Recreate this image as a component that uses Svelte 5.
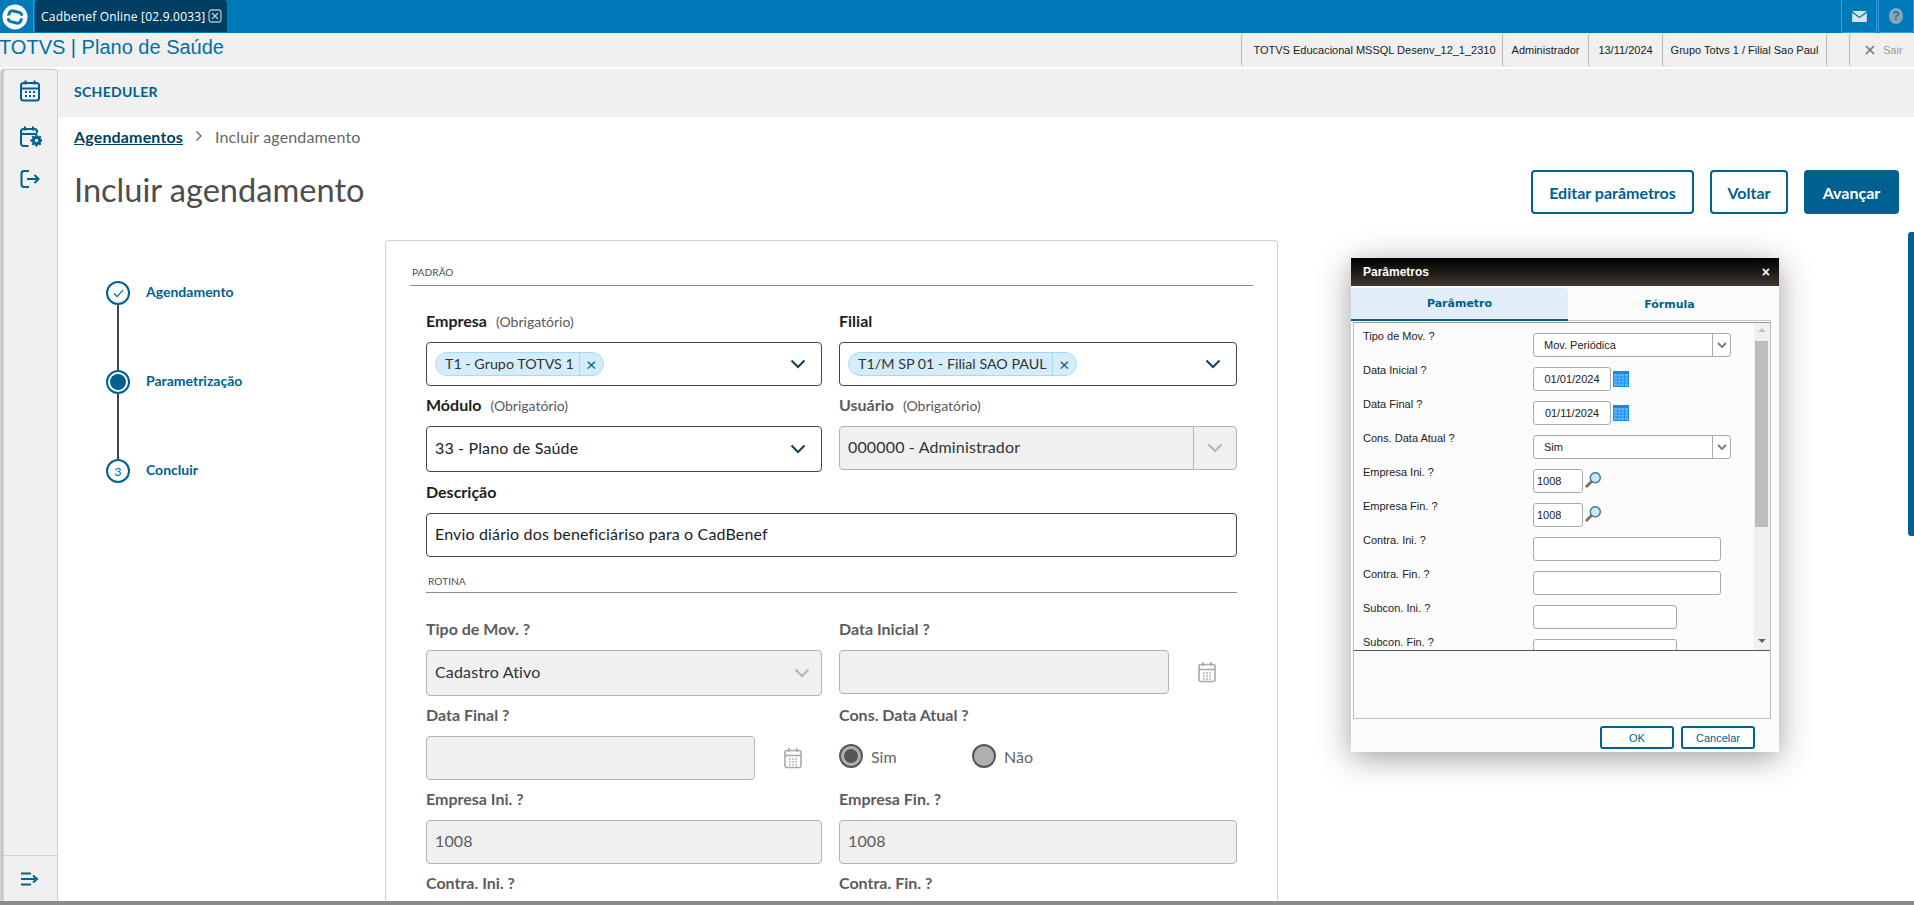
<script lang="ts">
  const info = [
    { text: 'TOTVS Educacional MSSQL Desenv_12_1_2310', w: 261 },
    { text: 'Administrador', w: 86 },
    { text: '13/11/2024', w: 74 },
    { text: 'Grupo Totvs 1 / Filial Sao Paul', w: 164 }
  ]

  const steps = [
    { label: 'Agendamento', state: 'done' },
    { label: 'Parametrização', state: 'active' },
    { label: 'Concluir', state: 'todo' }
  ]

  const params = [
    { label: 'Tipo de Mov. ?', kind: 'select', value: 'Mov. Periódica' },
    { label: 'Data Inicial ?', kind: 'date', value: '01/01/2024' },
    { label: 'Data Final ?', kind: 'date', value: '01/11/2024' },
    { label: 'Cons. Data Atual ?', kind: 'select', value: 'Sim' },
    { label: 'Empresa Ini. ?', kind: 'lookup', value: '1008' },
    { label: 'Empresa Fin. ?', kind: 'lookup', value: '1008' },
    { label: 'Contra. Ini. ?', kind: 'long', value: '' },
    { label: 'Contra. Fin. ?', kind: 'long', value: '' },
    { label: 'Subcon. Ini. ?', kind: 'mid', value: '' },
    { label: 'Subcon. Fin. ?', kind: 'mid', value: '' }
  ]
</script>

{#snippet chevron(cls)}
  <svg class={cls} viewBox="0 0 16 10" width="16" height="10" fill="none" stroke="currentColor" stroke-width="2">
    <path d="M1.500 1.500 8 8l6.500-6.500" />
  </svg>
{/snippet}

{#snippet calendar()}
  <svg class="cal-icon" viewBox="0 0 18 22" width="18" height="22" fill="none" stroke="currentColor" stroke-width="1.600">
    <rect x="1" y="3.500" width="16" height="17" rx="2" />
    <path d="M1 8.500h16M5 1v4M13 1v4" />
    <path d="M5 12h1.600M8.200 12h1.600M11.400 12h1.600M5 15h1.600M8.200 15h1.600M11.400 15h1.600M5 18h1.600M8.200 18h1.600M11.400 18h1.600" stroke-width="1.300" />
  </svg>
{/snippet}

<div class="page">
  <div class="topbar">
    <div class="logo">
      <svg viewBox="0 0 30 30" width="30" height="30">
        <circle cx="15" cy="15" r="12.500" fill="#fff" />
        <rect x="8.500" y="9.500" width="13" height="11" rx="3.500" transform="rotate(14 15 15)" fill="#fff" stroke="#0079b8" stroke-width="3" />
        <path d="M6 15.500 10 14.500M20 15.500 24 14.500" stroke="#fff" stroke-width="2.500" />
      </svg>
    </div>
    <div class="tab">
      <span>Cadbenef Online [02.9.0033]</span>
      <svg viewBox="0 0 14 14" width="14" height="14" fill="none" stroke="#a9bccb" stroke-width="1.300">
        <rect x="1" y="1" width="12" height="12" rx="2.500" />
        <path d="M4 4l6 6M10 4l-6 6" stroke-width="1.600" />
      </svg>
    </div>
    <div class="top-actions">
      <div class="top-btn">
        <svg viewBox="0 0 16 12" width="15" height="11" fill="#d5e4ef">
          <path d="M0 0h16L8 6.200z" />
          <path d="M0 2l8 6 8-6v10H0z" />
        </svg>
      </div>
      <div class="top-btn">
        <span class="help">?</span>
      </div>
    </div>
  </div>

  <div class="titlebar">
    <div class="app-title">TOTVS | Plano de Saúde</div>
    <div class="info">
      {#each info as item}
        <div class="info-cell" style="width: {item.w}px">{item.text}</div>
      {/each}
      <div class="info-gap"></div>
      <div class="info-exit">
        <svg viewBox="0 0 10 10" width="10" height="10" fill="none" stroke="#777" stroke-width="1.700">
          <path d="M1 1l8 8M9 1l-8 8" />
        </svg>
        <span>Sair</span>
      </div>
    </div>
  </div>

  <div class="body">
    <aside class="sidebar">
      <div class="side-icons">
        <svg viewBox="0 0 24 24" width="24" height="24" fill="none" stroke="#00608f" stroke-width="2">
          <rect x="3" y="4" width="18" height="17.500" rx="2.500" />
          <path d="M3 9.500h18M7.500 1.500v4M16.500 1.500v4" />
          <path d="M7 13h2M11 13h2M15 13h2M7 17h2M11 17h2M15 17h2" />
        </svg>
        <svg class="gear-cal" viewBox="0 0 24 24" width="24" height="24" fill="none" stroke="#00608f" stroke-width="2">
          <path d="M10.500 21H5.500A2.500 2.500 0 0 1 3 18.500V6.500A2.500 2.500 0 0 1 5.500 4h11A2.500 2.500 0 0 1 19 6.500V8" />
          <path d="M3 9h16M7 1.500v4M15 1.500v4" />
          <circle cx="18.500" cy="15.500" r="4.600" fill="#00608f" stroke="none" />
          <path d="M18.500 9.500v12M12.500 15.500h12M14.300 11.300l8.400 8.400M22.700 11.300l-8.400 8.400" stroke-width="2.300" />
          <circle cx="18.500" cy="15.500" r="1.700" fill="#f0f0f0" stroke="none" />
        </svg>
        <svg viewBox="0 0 24 24" width="24" height="24" fill="none" stroke="#00608f" stroke-width="2">
          <path d="M11 4H6A2.500 2.500 0 0 0 3.500 6.500v11A2.500 2.500 0 0 0 6 20h5" />
          <path d="M9 12h11.500M16.500 8l4 4-4 4" />
        </svg>
      </div>
      <div class="side-bottom">
        <svg viewBox="0 0 18 14" width="18" height="14" fill="none" stroke="#00608f" stroke-width="2">
          <path d="M0 1.500h10M0 7h14M0 12.500h10" />
          <path d="M12 3.500 16 7l-4 3.500" />
        </svg>
      </div>
    </aside>

    <main class="content">
      <div class="scheduler">SCHEDULER</div>
      <nav class="breadcrumb">
        <a href="#top">Agendamentos</a>
        <svg viewBox="0 0 8 12" width="8" height="12" fill="none" stroke="#666" stroke-width="1.300">
          <path d="M1.500 1.500 6 6l-4.500 4.500" />
        </svg>
        <span>Incluir agendamento</span>
      </nav>
      <header class="heading">
        <h1>Incluir agendamento</h1>
        <div class="actions">
          <button class="btn wide">Editar parâmetros</button>
          <button class="btn back">Voltar</button>
          <button class="btn primary">Avançar</button>
        </div>
      </header>

      <div class="wizard">
        <ol class="stepper">
          {#each steps as step, i}
            {#if i > 0}
              <li class="connector"></li>
            {/if}
            <li class="step">
              <span class="bullet {step.state}">
                {#if step.state === 'done'}
                  <svg viewBox="0 0 12 10" width="11" height="9" fill="none" stroke="#00608f" stroke-width="1.200">
                    <path d="M1 5l3.500 3.500L11 1" />
                  </svg>
                {:else if step.state === 'active'}
                  <span class="dot"></span>
                {:else}
                  3
                {/if}
              </span>
              <span class="step-label">{step.label}</span>
            </li>
          {/each}
        </ol>

        <section class="card">
          <div class="divider first">PADRÃO</div>

          <div class="form">
            <div class="row">
              <div class="field">
                <div class="label"><b>Empresa</b> <small>(Obrigatório)</small></div>
                <div class="control h44">
                  <span class="chip"><span class="chip-text">T1 - Grupo TOTVS 1</span><span class="chip-x">×</span></span>
                  {@render chevron('chev')}
                </div>
              </div>
              <div class="field">
                <div class="label"><b>Filial</b></div>
                <div class="control h44">
                  <span class="chip"><span class="chip-text">T1/M SP 01 - Filial SAO PAUL</span><span class="chip-x">×</span></span>
                  {@render chevron('chev')}
                </div>
              </div>
            </div>

            <div class="row row-e">
              <div class="field">
                <div class="label"><b>Módulo</b> <small>(Obrigatório)</small></div>
                <div class="control h46">
                  <span class="value">33 - Plano de Saúde</span>
                  {@render chevron('chev')}
                </div>
              </div>
              <div class="field">
                <div class="label off"><b>Usuário</b> <small>(Obrigatório)</small></div>
                <div class="control h44 disabled split">
                  <span class="value dark">000000 - Administrador</span>
                  <span class="split-btn">{@render chevron('chev muted')}</span>
                </div>
              </div>
            </div>

            <div class="row-c field">
              <div class="label"><b>Descrição</b></div>
              <div class="control h44"><span class="value">Envio diário dos beneficiáriso para o CadBenef</span></div>
            </div>

            <div class="divider inner">ROTINA</div>

            <div class="row row-d">
              <div class="field">
                <div class="label off"><b>Tipo de Mov. ?</b></div>
                <div class="control h46 disabled">
                  <span class="value dark">Cadastro Ativo</span>
                  {@render chevron('chev muted thin')}
                </div>
              </div>
              <div class="field">
                <div class="label off"><b>Data Inicial ?</b></div>
                <div class="date-wrap right">
                  <div class="control h44 disabled"></div>
                  {@render calendar()}
                </div>
              </div>
            </div>

            <div class="row row-e">
              <div class="field">
                <div class="label off"><b>Data Final ?</b></div>
                <div class="date-wrap">
                  <div class="control h44 disabled"></div>
                  {@render calendar()}
                </div>
              </div>
              <div class="field">
                <div class="label off"><b>Cons. Data Atual ?</b></div>
                <div class="radios">
                  <span class="radio"><span class="circle on"></span>Sim</span>
                  <span class="radio"><span class="circle"></span>Não</span>
                </div>
              </div>
            </div>

            <div class="row row-e">
              <div class="field">
                <div class="label off"><b>Empresa Ini. ?</b></div>
                <div class="control h44 disabled"><span class="value grey">1008</span></div>
              </div>
              <div class="field">
                <div class="label off"><b>Empresa Fin. ?</b></div>
                <div class="control h44 disabled"><span class="value grey">1008</span></div>
              </div>
            </div>

            <div class="row row-e">
              <div class="field">
                <div class="label off"><b>Contra. Ini. ?</b></div>
              </div>
              <div class="field">
                <div class="label off"><b>Contra. Fin. ?</b></div>
              </div>
            </div>
          </div>
        </section>
      </div>
    </main>
  </div>

  <div class="bottom-edge"></div>

  <div class="page-scroll"></div>

  <div class="dialog">
    <div class="dlg-head">
      <span>Parâmetros</span>
      <span class="dlg-close">×</span>
    </div>
    <div class="dlg-tabs">
      <div class="dlg-tab current">Parâmetro</div>
      <div class="dlg-tab">Fórmula</div>
    </div>
    <div class="dlg-panel">
      <div class="dlg-scroll">
        <div class="dlg-rows">
          {#each params as p}
            <div class="dlg-row">
              <span class="dlg-label">{p.label}</span>
              {#if p.kind === 'select'}
                <span class="dlg-input select">
                  <span>{p.value}</span>
                  <span class="select-arrow">
                    <svg viewBox="0 0 10 7" width="10" height="7" fill="none" stroke="#777" stroke-width="1.800">
                      <path d="M1 1l4 4 4-4" />
                    </svg>
                  </span>
                </span>
              {:else if p.kind === 'date'}
                <span class="dlg-input date">{p.value}</span>
                <svg class="grid-icon" viewBox="0 0 16 16" width="16" height="16">
                  <rect width="16" height="16" fill="#0f8bf0" />
                  <rect y="3" x="1" width="14" height="12" fill="#66b5f5" />
                  <path d="M1 6h14M1 9h14M1 12h14M4.500 3v12M8 3v12M11.500 3v12" stroke="#0f8bf0" stroke-width="0.800" />
                </svg>
              {:else if p.kind === 'lookup'}
                <span class="dlg-input code">{p.value}</span>
                <svg class="lens" viewBox="0 0 16 16" width="16" height="16">
                  <path d="M6.500 9.500 1.800 14.200" stroke="#8b6a4a" stroke-width="2.800" stroke-linecap="round" />
                  <circle cx="10.300" cy="5.700" r="5" fill="#cfe8f8" stroke="#3f7fae" stroke-width="1.500" />
                </svg>
              {:else}
                <span class="dlg-input {p.kind}"></span>
              {/if}
            </div>
          {/each}
        </div>
        <div class="dlg-bar">
          <span class="arrow up"></span>
          <span class="thumb"></span>
          <span class="arrow down"></span>
        </div>
      </div>
      <div class="dlg-blank"></div>
    </div>
    <div class="dlg-foot">
      <button class="dlg-btn">OK</button>
      <button class="dlg-btn">Cancelar</button>
    </div>
  </div>
</div>

<style>
  :global(body) {
    margin: 0;
    background: #fff;
  }

  .page {
    position: relative;
    width: 1914px;
    height: 905px;
    overflow: hidden;
    display: flex;
    flex-direction: column;
    font-family: 'Lato', 'Open Sans', sans-serif;
    color: #1d1d1d;
  }

  .topbar {
    flex: 0 0 33px;
    display: flex;
    background: #0079b8;
    box-sizing: border-box;
  }

  .logo {
    width: 34px;
    height: 33px;
    border-right: 1px solid #3a9be0;
    box-sizing: border-box;
    display: flex;
    align-items: center;
    justify-content: center;
    padding-right: 3px;
  }

  .tab {
    margin-left: 1px;
    width: 192px;
    height: 32px;
    background: #003f64;
    border-radius: 4px 4px 0 0;
    display: flex;
    align-items: center;
    gap: 3px;
    padding-left: 6px;
    box-sizing: border-box;
    color: #fff;
    font: 12px 'Open Sans', sans-serif;
    letter-spacing: 0.2px;
  }

  .top-actions {
    margin-left: auto;
    display: flex;
  }

  .top-btn {
    width: 36px;
    height: 33px;
    border: 1px solid #3a9be0;
    border-top: 0;
    border-radius: 0 0 3px 3px;
    box-sizing: border-box;
    display: flex;
    align-items: center;
    justify-content: center;
    margin-left: 1px;
  }

  .help {
    width: 14px;
    height: 16px;
    border-radius: 50%;
    background: #8da5b3;
    color: #0079b8;
    font: bold 12px/16px 'Liberation Sans', sans-serif;
    text-align: center;
  }

  .titlebar {
    flex: 0 0 34px;
    display: flex;
    justify-content: space-between;
    background: #f0f0f0;
  }

  .app-title {
    font: 20px/28px 'Liberation Sans', sans-serif;
    color: #0071a8;
    margin-left: -1px;
  }

  .info {
    display: flex;
    font: 11px 'Liberation Sans', sans-serif;
    color: #1a1a1a;
  }

  .info-cell {
    display: flex;
    align-items: center;
    justify-content: center;
    box-sizing: border-box;
    border-left: 1px solid #b9b9b9;
    border-radius: 4px 0 0 4px;
    white-space: nowrap;
  }

  .info-cell:first-child {
    padding-left: 5px;
  }

  .info-gap {
    width: 23px;
    box-sizing: border-box;
    border-left: 1px solid #b9b9b9;
    border-radius: 4px 0 0 4px;
  }

  .info-exit {
    width: 65px;
    box-sizing: border-box;
    border-left: 1px solid #b9b9b9;
    border-radius: 4px 0 0 4px;
    display: flex;
    align-items: center;
    gap: 8px;
    padding-left: 15px;
    color: #9b9b9b;
  }

  .body {
    flex: 1;
    min-height: 0;
    display: flex;
    margin-top: 2px;
  }

  .sidebar {
    width: 55px;
    margin-left: 3px;
    box-sizing: border-box;
    background: #f0f0f0;
    border: 1px solid #cfcfcf;
    border-bottom: 0;
    border-radius: 4px 4px 0 0;
    display: flex;
    flex-direction: column;
    justify-content: space-between;
    box-shadow: -3px 0 2px #c4c4c4;
  }

  .side-icons {
    display: flex;
    flex-direction: column;
    align-items: center;
    padding: 9px 1px 0 0;
    gap: 20px;
  }

  .gear-cal {
    margin: 2px 0 -2px;
  }

  .side-bottom {
    height: 45px;
    border-top: 1px solid #cfcfcf;
    display: flex;
    align-items: center;
    justify-content: center;
    padding-right: 1px;
  }

  .content {
    flex: 1;
    min-width: 0;
    display: flex;
    flex-direction: column;
  }

  .scheduler {
    flex: 0 0 48px;
    box-sizing: border-box;
    padding: 0 0 4px 16px;
    background: #f0f0f0;
    display: flex;
    align-items: center;
    font-size: 14px;
    font-weight: 700;
    color: #00608f;
    letter-spacing: 0.3px;
  }

  .breadcrumb {
    height: 38px;
    padding-left: 16px;
    display: flex;
    align-items: center;
    gap: 12px;
    font-size: 16px;
    letter-spacing: 0.15px;
    color: #666;
  }

  .breadcrumb a {
    color: #003f64;
    font-weight: 700;
    text-decoration: underline;
  }

  .heading {
    margin-top: 15px;
    height: 44px;
    padding: 0 15px 0 16px;
    display: flex;
    justify-content: space-between;
    align-items: flex-start;
  }

  h1 {
    margin: 0;
    font-size: 32.6px;
    line-height: 40px;
    font-weight: 400;
    color: #4d4d4d;
  }

  .actions {
    display: flex;
    gap: 16px;
  }

  .btn {
    height: 44px;
    width: 95px;
    padding: 0;
    background: #fff;
    border: 2px solid #00608f;
    border-radius: 4px;
    color: #00608f;
    font: 700 16px 'Lato', sans-serif;
  }

  .btn.wide {
    width: 163px;
  }

  .btn.back {
    width: 78px;
  }

  .btn.primary {
    background: #00608f;
    color: #fff;
  }

  .wizard {
    flex: 1;
    min-height: 0;
    display: flex;
    margin-top: 26px;
  }

  .stepper {
    list-style: none;
    margin: 41px 0 0;
    padding: 0 0 0 48px;
    width: 327px;
    box-sizing: border-box;
  }

  .step {
    display: flex;
    align-items: center;
    gap: 16px;
    height: 24px;
  }

  .connector {
    width: 2px;
    height: 65px;
    margin-left: 11px;
    background: #444;
  }

  .bullet {
    width: 24px;
    height: 24px;
    box-sizing: border-box;
    border: 2px solid #00608f;
    border-radius: 50%;
    display: flex;
    align-items: center;
    justify-content: center;
    font-size: 12px;
    color: #00608f;
  }

  .dot {
    width: 16px;
    height: 16px;
    border-radius: 50%;
    background: #00608f;
  }

  .step-label {
    margin-top: -3px;
    font-size: 14px;
    font-weight: 700;
    color: #00608f;
  }

  .card {
    width: 893px;
    box-sizing: border-box;
    border: 1px solid #d0d0d0;
    border-bottom: 0;
    border-radius: 4px 4px 0 0;
    padding: 0 24px 0 24px;
    overflow: hidden;
  }

  .divider {
    font-size: 10.2px;
    color: #4d4d4d;
    border-bottom: 1px solid #8f8f8f;
    display: flex;
    align-items: center;
    box-sizing: border-box;
    height: 21px;
    padding-left: 2px;
  }

  .divider.first {
    margin-top: 24px;
    padding-bottom: 6px;
  }

  .divider.inner {
    margin-top: 15px;
    padding-bottom: 3px;
  }

  .form {
    padding: 0 16px;
    margin-top: 24px;
  }

  .row {
    display: grid;
    grid-template-columns: 396px 398px;
    column-gap: 17px;
  }

  .row-c {
    margin-top: 9px;
  }

  .row-d {
    margin-top: 25px;
  }

  .row-e {
    margin-top: 8px;
  }

  .label {
    height: 32px;
    box-sizing: border-box;
    line-height: 22px;
    font-size: 16px;
  }

  .label b {
    font-weight: 700;
  }

  .label small {
    font-size: 14px;
    color: #5a5a5a;
    margin-left: 5px;
  }

  .label.off b {
    color: #5c5c5c;
  }

  .control {
    box-sizing: border-box;
    border: 1px solid #444;
    border-radius: 4px;
    display: flex;
    align-items: center;
    justify-content: space-between;
    padding: 0 8px;
    background: #fff;
  }

  .h44 {
    height: 44px;
  }

  .h46 {
    height: 46px;
  }

  .control.disabled {
    background: #f0f0f0;
    border-color: #b5b5b5;
  }

  .control.split {
    padding-right: 0;
  }

  .split-btn {
    width: 42px;
    height: 100%;
    border-left: 1px solid #b5b5b5;
    display: flex;
    align-items: center;
    justify-content: center;
  }

  .value {
    font-size: 16px;
    letter-spacing: 0.15px;
    padding-bottom: 3px;
    color: #1d1d1d;
  }

  .value.dark {
    color: #333;
  }

  .value.grey {
    color: #5c5c5c;
  }

  :global(.chev) {
    color: #163d57;
    margin-right: 7px;
  }

  :global(.chev.muted) {
    color: #b5b5b5;
    margin-right: 0;
  }

  :global(.chev.thin) {
    margin-right: 3px;
  }

  .chip {
    display: inline-flex;
    align-items: center;
    height: 24px;
    background: #d5edfb;
    border: 1px solid #a8daf7;
    border-radius: 12px;
    box-sizing: border-box;
    font-size: 14.3px;
    color: #333;
  }

  .chip-text {
    padding: 0 5px 0 9px;
    line-height: 22px;
    white-space: nowrap;
  }

  .chip-x {
    border-left: 1px solid #a8daf7;
    width: 23px;
    text-align: center;
    color: #00608f;
    font-size: 18px;
    line-height: 22px;
  }

  .date-wrap {
    display: grid;
    grid-template-columns: 329px 76px;
    align-items: center;
    justify-items: center;
  }

  .date-wrap .control {
    justify-self: stretch;
  }

  .date-wrap.right {
    grid-template-columns: 330px 76px;
  }

  .cal-icon {
    color: #a8a8a8;
  }

  .radios {
    display: flex;
    align-items: center;
    height: 40px;
    gap: 39px;
    font-size: 16px;
    color: #666;
  }

  .radio {
    display: flex;
    align-items: center;
    gap: 8px;
    width: 94px;
  }

  .circle {
    width: 24px;
    height: 24px;
    box-sizing: border-box;
    border: 2px solid #555;
    border-radius: 50%;
    background: #b0b0b0;
    position: relative;
  }

  .circle.on::after {
    content: '';
    position: absolute;
    inset: 3px;
    border-radius: 50%;
    background: #555;
  }

  .bottom-edge {
    flex: 0 0 4px;
    background: #8b8b8b;
  }

  .page-scroll {
    position: absolute;
    right: 0;
    top: 232px;
    width: 6px;
    height: 304px;
    border-radius: 3px 0 0 3px;
    background: #00608f;
  }

  .dialog {
    position: absolute;
    left: 1351px;
    top: 258px;
    width: 428px;
    height: 494px;
    background: #fcfcfc;
    box-shadow: 0 6px 30px rgba(0, 0, 0, 0.38);
    display: flex;
    flex-direction: column;
    font-family: 'Liberation Sans', sans-serif;
  }

  .dlg-head {
    height: 28px;
    flex: none;
    background: linear-gradient(#000, #40362f);
    color: #fff;
    font-size: 12px;
    font-weight: 700;
    display: flex;
    justify-content: space-between;
    align-items: center;
    padding: 0 9px 0 12px;
  }

  .dlg-close {
    font-size: 14px;
  }

  .dlg-tabs {
    display: flex;
    margin: 2px 8px 0 0;
    height: 33px;
    flex: none;
    box-sizing: border-box;
    border-bottom: 1px solid #c8c8c8;
  }

  .dlg-tab {
    flex: 1;
    display: flex;
    align-items: center;
    justify-content: center;
    font: 700 11px 'DejaVu Sans', sans-serif;
    color: #00608f;
  }

  .dlg-tab.current {
    flex: 0 0 217px;
    height: 33px;
    box-sizing: border-box;
    background: #e1edf9;
    border-bottom: 2px solid #00608f;
    border-radius: 4px 4px 0 0;
  }

  .dlg-panel {
    margin: 1px 8px 0 2px;
    height: 397px;
    flex: none;
    box-sizing: border-box;
    border: 1px solid #bdbdbd;
    border-top-color: #9a9a9a;
    display: flex;
    flex-direction: column;
  }

  .dlg-scroll {
    height: 327px;
    flex: none;
    border-bottom: 1px solid #555;
    display: flex;
    overflow: hidden;
    position: relative;
  }

  .dlg-rows {
    flex: 1;
    padding: 10px 0 0 9px;
  }

  .dlg-row {
    height: 24px;
    margin-bottom: 10px;
    display: flex;
    align-items: flex-start;
    font-size: 11px;
    color: #222;
  }

  .dlg-label {
    width: 170px;
    flex: none;
    margin-top: -4px;
    line-height: 14px;
  }

  .dlg-input {
    height: 24px;
    box-sizing: border-box;
    border: 1px solid #a9a9a9;
    border-radius: 3px;
    background: #fff;
    display: flex;
    align-items: center;
  }

  .select {
    width: 198px;
    padding-left: 10px;
    justify-content: space-between;
  }

  .select-arrow {
    width: 17px;
    height: 100%;
    border-left: 1px solid #a9a9a9;
    display: flex;
    align-items: center;
    justify-content: center;
  }

  .date {
    width: 78px;
    justify-content: center;
  }

  .code {
    width: 50px;
    padding-left: 3px;
  }

  .long {
    width: 188px;
  }

  .mid {
    width: 144px;
  }

  .grid-icon {
    margin: 4px 0 0 2px;
  }

  .lens {
    margin: 3px 0 0 2px;
  }

  .dlg-bar {
    width: 16px;
    flex: none;
    background: #f0f0f0;
    display: flex;
    flex-direction: column;
    align-items: center;
    position: relative;
  }

  .thumb {
    position: absolute;
    top: 18px;
    left: 1px;
    width: 13px;
    height: 186px;
    background: #bdbdbd;
  }

  .arrow {
    position: absolute;
    left: 4px;
    width: 0;
    height: 0;
    border: 4px solid transparent;
  }

  .arrow.up {
    top: 5px;
    border-bottom: 4px solid #c0c0c0;
    border-top: 0;
  }

  .arrow.down {
    bottom: 7px;
    border-top: 4px solid #666;
    border-bottom: 0;
  }

  .dlg-blank {
    flex: 1;
  }

  .dlg-foot {
    flex: 1;
    display: flex;
    justify-content: flex-end;
    gap: 7px;
    padding: 7px 24px 0 0;
  }

  .dlg-btn {
    width: 74px;
    height: 23px;
    box-sizing: border-box;
    background: #fff;
    border: 2px solid #00608f;
    border-radius: 3px;
    color: #00608f;
    font: 11px 'Liberation Sans', sans-serif;
    padding: 0;
  }
</style>
